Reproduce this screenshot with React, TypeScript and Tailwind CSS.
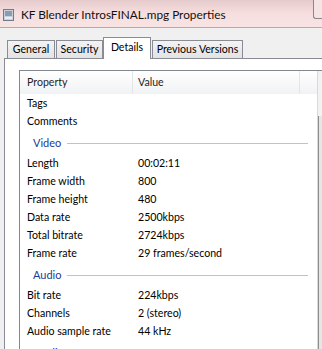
import React from 'react';

type Row = { label: string; value?: string };
type Section = { title: string; rows: Row[] };

const topRows: Row[] = [{ label: 'Tags' }, { label: 'Comments' }];

const sections: Section[] = [
  {
    title: 'Video',
    rows: [
      { label: 'Length', value: '00:02:11' },
      { label: 'Frame width', value: '800' },
      { label: 'Frame height', value: '480' },
      { label: 'Data rate', value: '2500kbps' },
      { label: 'Total bitrate', value: '2724kbps' },
      { label: 'Frame rate', value: '29 frames/second' },
    ],
  },
  {
    title: 'Audio',
    rows: [
      { label: 'Bit rate', value: '224kbps' },
      { label: 'Channels', value: '2 (stereo)' },
      { label: 'Audio sample rate', value: '44 kHz' },
    ],
  },
  { title: 'Media', rows: [] },
];

const FileIcon = () => (
  <svg width="11" height="12" viewBox="0 0 11 12" className="shrink-0">
    <rect x="0.5" y="0.5" width="10" height="11" fill="#c9d2dc" stroke="#6f7c8a" />
    <rect x="2" y="2" width="7" height="5" fill="#8b9bb0" />
    <rect x="2" y="8" width="7" height="2" fill="#e9eef3" />
  </svg>
);

const PropRow = ({ row }: { row: Row }) => (
  <div className="flex h-[18px] items-center pt-[1px]">
    <span className="w-[118px] shrink-0 pl-[7px]">{row.label}</span>
    <span>{row.value}</span>
  </div>
);

const Tab = ({ label, width }: { label: string; width: string }) => (
  <div
    className={`flex h-[18px] items-center justify-center border border-b-0 border-[#898c95] bg-gradient-to-b from-[#f3f3f3] to-[#e3e3e3] pt-[1px] ${width}`}
  >
    {label}
  </div>
);

export default function App() {
  return (
    <div
      className="flex h-[349px] w-[322px] flex-col overflow-hidden bg-[#f0f0f0] text-[10.6px] text-black"
      style={{ fontFamily: 'Lato, "Noto Sans", sans-serif' }}
    >
      {/* title bar */}
      <div className="flex h-[28px] shrink-0 items-start border-b border-[#b9a9aa] bg-gradient-to-b from-[#e6cbcc] via-[#f6dedf] to-[#f8e3e3]">
        <div className="flex items-center gap-[7px] pl-[3px] pt-[6px]">
          <FileIcon />
          <span className="text-[11.8px] leading-[18px] text-[#111]">KF Blender IntrosFINAL.mpg Properties</span>
        </div>
        <div className="ml-auto h-[19px] w-[9px] rounded-bl-[3px] border-b border-l border-[#8f8585] bg-[#f5e4e4]" />
      </div>

      {/* tabs */}
      <div className="flex h-[30px] shrink-0 items-end pl-[7px]">
        <Tab label="General" width="w-[48px]" />
        <div className="ml-[1px]">
          <Tab label="Security" width="w-[47px]" />
        </div>
        <div className="relative -mb-px flex h-[22px] w-[48px] justify-center border border-b-0 border-[#898c95] bg-white pt-[2px]">
          Details
        </div>
        <div className="ml-[1px]">
          <Tab label="Previous Versions" width="w-[91px]" />
        </div>
      </div>

      {/* tab page */}
      <div className="ml-[4px] flex-1 border-l border-t border-[#898c95] bg-white pl-[14px] pt-[11px]">
        <div className="flex h-full border-l border-t border-[#828790]">
          <div className="flex-1">
            <div className="flex h-[23px] items-center bg-gradient-to-b from-white to-[#f1f2f4] text-[#1e1e1e]">
              <span className="h-full w-[113px] shrink-0 border-r border-[#e3e5e8] pl-[7px] leading-[23px]">Property</span>
              <span className="h-full flex-1 border-r border-[#e3e5e8] pl-[5px] leading-[23px]">Value</span>
              <span className="w-[17px]" />
            </div>
            {topRows.map((r) => (
              <PropRow key={r.label} row={r} />
            ))}
            {sections.map((s) => (
              <div key={s.title}>
                <div className="flex h-[24px] items-center pl-[13px] pr-[9px] pt-[2px]">
                  <span className="text-[11px] text-[#1f3a93]">{s.title}</span>
                  <div className="ml-[6px] h-px flex-1 bg-[#b7c3d6]" />
                </div>
                {s.rows.map((r) => (
                  <PropRow key={r.label} row={r} />
                ))}
              </div>
            ))}
          </div>
          <div className="flex w-[5px] shrink-0 flex-col border-l border-[#d9d9d9] bg-[#f2f2f2]">
            <div className="h-[45px]" />
            <div className="flex-1 border-l border-[#8d8d8d] bg-[#e6e6e6]" />
          </div>
        </div>
      </div>
    </div>
  );
}
